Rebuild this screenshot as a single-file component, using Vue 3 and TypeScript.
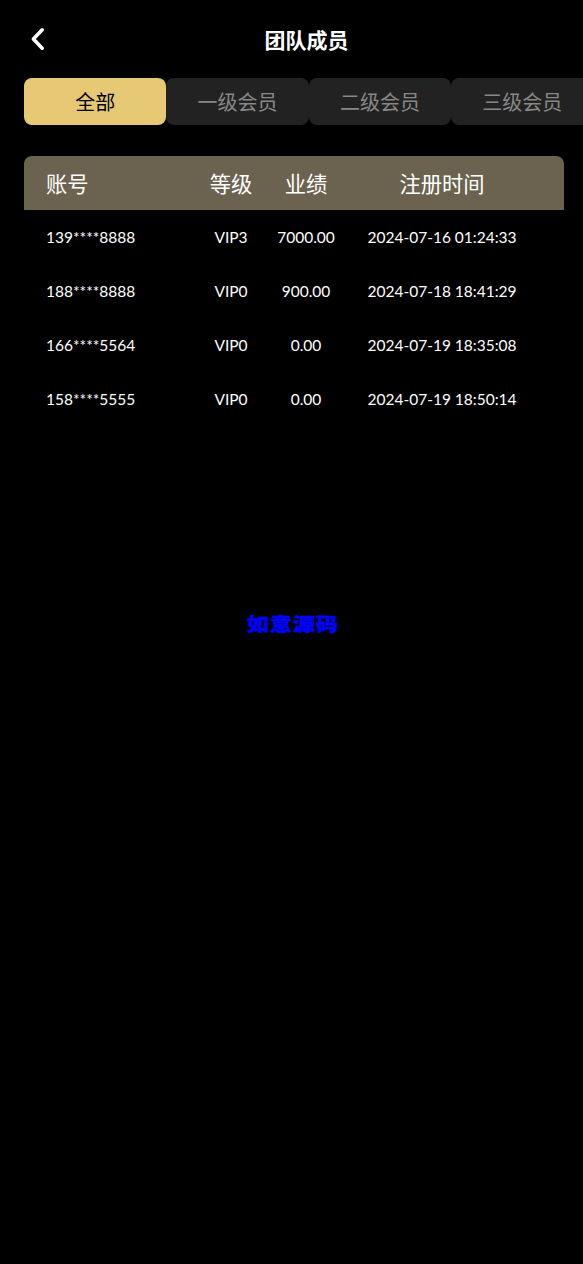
<script setup lang="ts">
interface Member {
  account: string
  level: string
  amount: string
  time: string
}

const tabs: string[] = ['全部', '一级会员', '二级会员', '三级会员']
const columns: string[] = ['账号', '等级', '业绩', '注册时间']
const members: Member[] = [
  { account: '139****8888', level: 'VIP3', amount: '7000.00', time: '2024-07-16 01:24:33' },
  { account: '188****8888', level: 'VIP0', amount: '900.00', time: '2024-07-18 18:41:29' },
  { account: '166****5564', level: 'VIP0', amount: '0.00', time: '2024-07-19 18:35:08' },
  { account: '158****5555', level: 'VIP0', amount: '0.00', time: '2024-07-19 18:50:14' },
]
</script>

<template>
  <div class="page">
    <header class="nav">
      <svg class="back" width="16" height="24" viewBox="0 0 16 24" fill="none">
        <path d="M12.2 2.8 L3.4 12 L12.2 21.2" stroke="#fff" stroke-width="3.6" stroke-linecap="round" stroke-linejoin="round" />
      </svg>
      <h1 class="title">团队成员</h1>
    </header>

    <nav class="tabs">
      <div v-for="(tab, i) in tabs" :key="tab" class="tab" :class="{ active: i === 0 }">{{ tab }}</div>
    </nav>

    <section class="table">
      <div class="row head">
        <div v-for="(col, i) in columns" :key="col" class="cell" :class="{ first: i === 0 }">{{ col }}</div>
      </div>
      <div v-for="m in members" :key="m.account + m.time" class="row body">
        <div class="cell first">{{ m.account }}</div>
        <div class="cell">{{ m.level }}</div>
        <div class="cell">{{ m.amount }}</div>
        <div class="cell">{{ m.time }}</div>
      </div>
    </section>

    <div class="mark"><span class="mark-text">如意源码</span></div>
  </div>
</template>

<style>
html, body {
  margin: 0;
  background: #000;
}
</style>

<style scoped>
.page {
  box-sizing: border-box;
  width: 583px;
  height: 1264px;
  overflow: hidden;
  background: #000;
  color: #fff;
  font-family: "Noto Sans CJK SC", "Noto Sans", sans-serif;
}
.nav {
  position: relative;
  height: 78px;
  box-sizing: border-box;
  padding-top: 24px;
}
.back {
  position: absolute;
  left: 29.5px;
  top: 26.5px;
}
.title {
  margin: 0;
  text-align: center;
  padding-left: 30px;
  font-size: 21px;
  line-height: 30px;
  font-weight: 700;
}
.tabs {
  display: flex;
  padding-left: 24px;
  overflow: hidden;
}
.tab {
  flex: 0 0 142.4px;
  height: 47px;
  line-height: 47px;
  text-align: center;
  font-size: 20px;
  border-radius: 8px;
  background: #222;
  color: #888;
}
.tab.active {
  background: #e6c875;
  color: #000;
}
.table {
  width: 540px;
  margin: 31px 0 0 24px;
}
.row {
  box-sizing: border-box;
  display: grid;
  grid-template-columns: 145px 80px 70px 202px;
  padding: 0 21px 0 22px;
  height: 54px;
  align-items: center;
  text-align: center;
}
.head {
  background: #6b634f;
  border-radius: 8px 8px 0 0;
  font-size: 21.3px;
  padding-bottom: 2px;
}
.body {
  font-family: Lato, "Noto Sans CJK SC", sans-serif;
  font-size: 15.5px;
}
.first {
  text-align: left;
}
.mark {
  margin-top: 182px;
  padding-left: 3px;
  text-align: center;
  color: #00f;
  font-size: 22px;
  line-height: 30px;
  font-weight: 900;
}
.mark-text {
  display: inline-block;
  letter-spacing: 1px;
  transform: scaleY(0.84);
  -webkit-text-stroke: 0.5px #00f;
}
</style>
